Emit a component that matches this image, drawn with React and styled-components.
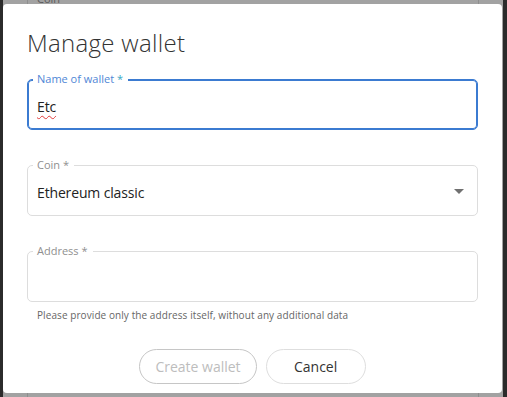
import React from "react";
import styled, { createGlobalStyle } from "styled-components";

const Global = createGlobalStyle`
  html, body { margin: 0; padding: 0; background: #2b2b2b; }
  body { font-family: "Open Sans", "Noto Sans", sans-serif; }
  * { box-sizing: border-box; }
`;

const Page = styled.div`
  width: 507px;
  height: 397px;
  background: #2b2b2b;
  padding-left: 3px;
  overflow: hidden;
`;

const Backdrop = styled.div`
  position: relative;
  width: 500px;
  height: 397px;
  background: #a2a2a2;
  padding-top: 4px;
  overflow: hidden;
`;

const BehindField = styled.div`
  position: absolute;
  left: 24px;
  width: 452px;
  top: -4px;
  height: 460px;
  border: 1px solid #8e8e8e;
  border-radius: 4px;
`;

const BehindLabel = styled.span`
  position: absolute;
  left: 9px;
  top: -5px;
  font-size: 11px;
  line-height: 14px;
  color: #5c5c5c;
`;

const Modal = styled.div`
  position: relative;
  z-index: 1;
  width: 499px;
  height: 389px;
  background: #fff;
  border-radius: 4px;
  padding: 23px 24px 0;
  display: flex;
  flex-direction: column;
`;

const Title = styled.h2`
  margin: 0 0 20px;
  font-size: 24px;
  line-height: 32px;
  font-weight: 300;
  letter-spacing: 0.3px;
  color: #333;
`;

const Form = styled.div`
  display: flex;
  flex-direction: column;
  gap: 35px;
`;

const Field = styled.div`
  position: relative;
  height: 51px;
  border: 1px solid ${(p) => (p.$focused ? "#3b7bd1" : "#dddddd")};
  box-shadow: ${(p) => (p.$focused ? "inset 0 0 0 1px #3b7bd1" : "none")};
  border-radius: 5px;
  display: flex;
  align-items: center;
  justify-content: space-between;
  padding: 4px 13px 0 9px;
`;

const Label = styled.span`
  position: absolute;
  left: 5px;
  top: -8px;
  padding: 0 5px 0 4px;
  background: #fff;
  font-size: 11px;
  line-height: 14px;
  color: ${(p) => (p.$focused ? "#4f87d6" : "#8f8f8f")};
`;

const Star = styled.span`
  color: ${(p) => (p.$focused ? "#39a7c4" : "inherit")};
`;

const Value = styled.div`
  font-size: 14px;
  line-height: 20px;
  letter-spacing: -0.15px;
  color: #222;
`;

const Misspelled = styled.span`
  text-decoration: underline wavy #e03a3a;
  text-decoration-thickness: 1px;
  text-underline-offset: 3px;
`;

const Arrow = styled.span`
  width: 0;
  height: 0;
  border-left: 5px solid transparent;
  border-right: 5px solid transparent;
  border-top: 5px solid #707070;
  margin-top: -2px;
`;

const AddressBlock = styled.div`
  display: flex;
  flex-direction: column;
`;

const Helper = styled.div`
  margin: 6px 0 0 10px;
  font-size: 10px;
  line-height: 14px;
  letter-spacing: 0.08px;
  color: #666;
`;

const Actions = styled.div`
  margin-top: 27px;
  display: flex;
  justify-content: center;
  gap: 9px;
`;

const Button = styled.button`
  height: 35px;
  min-width: ${(p) => (p.$wide ? "100px" : "0")};
  padding: 0 15px;
  border-radius: 18px;
  background: #fff;
  border: 1px solid ${(p) => (p.disabled ? "#c6c6c6" : "#dedede")};
  color: ${(p) => (p.disabled ? "#bdbdbd" : "#333")};
  font-family: inherit;
  font-size: 14px;
  cursor: pointer;
`;

export default function App() {
  return (
    <>
      <Global />
      <Page>
        <Backdrop>
          <BehindField>
            <BehindLabel>Coin</BehindLabel>
          </BehindField>
          <Modal>
            <Title>Manage wallet</Title>
            <Form>
              <Field $focused>
                <Label $focused>
                  Name of wallet <Star $focused>*</Star>
                </Label>
                <Value>
                  <Misspelled>Etc</Misspelled>
                </Value>
              </Field>
              <Field>
                <Label>
                  Coin <Star>*</Star>
                </Label>
                <Value>Ethereum classic</Value>
                <Arrow />
              </Field>
              <AddressBlock>
                <Field>
                  <Label>
                    Address <Star>*</Star>
                  </Label>
                  <Value />
                </Field>
                <Helper>Please provide only the address itself, without any additional data</Helper>
              </AddressBlock>
            </Form>
            <Actions>
              <Button disabled>Create wallet</Button>
              <Button $wide>Cancel</Button>
            </Actions>
          </Modal>
        </Backdrop>
      </Page>
    </>
  );
}
